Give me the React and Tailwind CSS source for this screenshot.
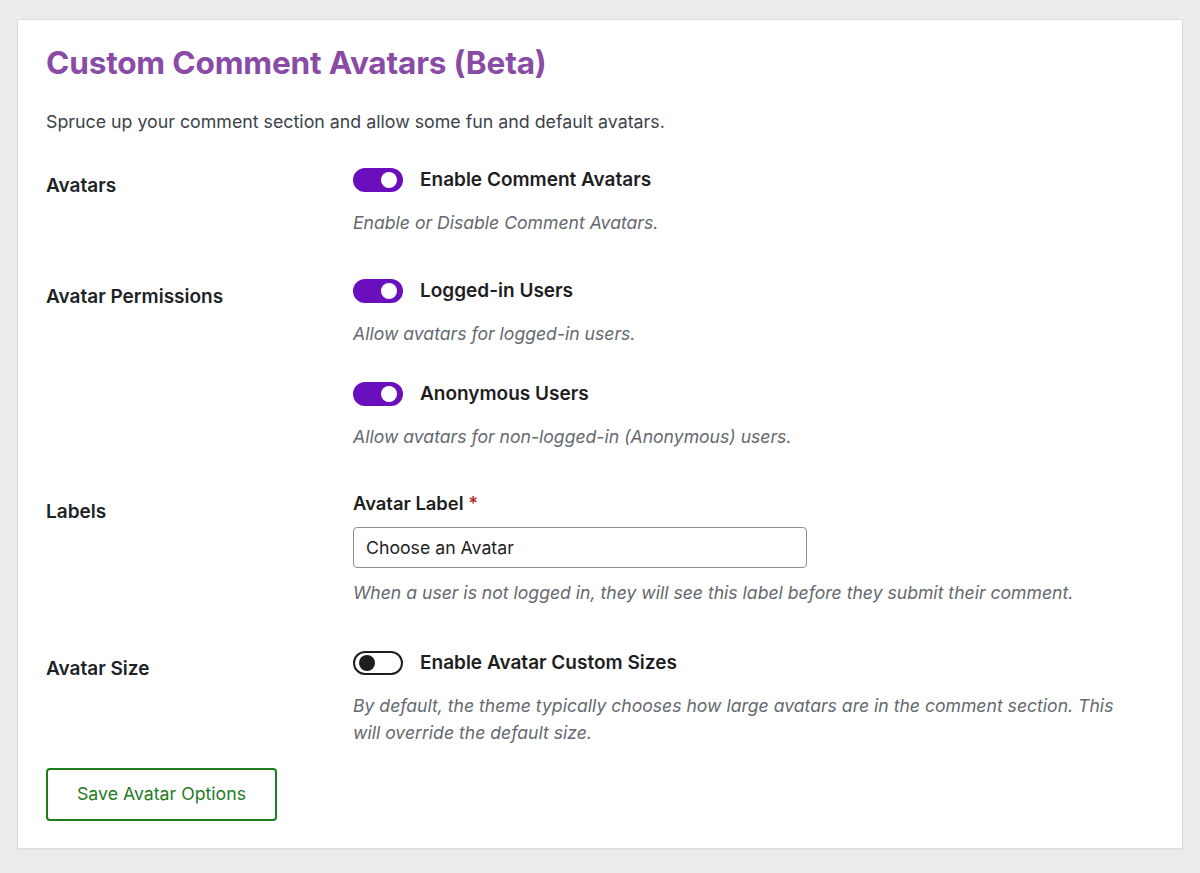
import React, { useState } from "react";

const Toggle = ({ checked, onChange }) => (
  <button
    type="button"
    onClick={() => onChange(!checked)}
    className={
      checked
        ? "relative flex h-[24px] w-[50px] shrink-0 items-center rounded-full border-2 border-[#6a0fbd] bg-[#6a0fbd]"
        : "relative flex h-[24px] w-[50px] shrink-0 items-center rounded-full border-2 border-[#1e1e1e] bg-white"
    }
  >
    <span
      className={
        checked
          ? "absolute right-[4px] h-[16px] w-[16px] rounded-full bg-white"
          : "absolute left-[4px] h-[16px] w-[16px] rounded-full bg-[#1e1e1e]"
      }
    />
  </button>
);

const ToggleField = ({ label, help, checked, onChange }) => (
  <div>
    <div className="flex items-center gap-[17px]">
      <Toggle checked={checked} onChange={onChange} />
      <span className="text-[19px] font-semibold leading-[26px] text-[#1e1e1e]">{label}</span>
    </div>
    <p className="mt-[16px] max-w-[785px] text-[17.6px] italic leading-[27px] text-[#646970]">{help}</p>
  </div>
);

const Row = ({ title, children, className = "", titleClass = "pt-[6px]" }) => (
  <div className={"flex " + className}>
    <div className={"w-[307px] shrink-0 text-[19px] font-semibold leading-[26px] text-[#1d2327] " + titleClass}>
      {title}
    </div>
    <div className="flex-1">{children}</div>
  </div>
);

export default function App() {
  const [avatars, setAvatars] = useState(true);
  const [loggedIn, setLoggedIn] = useState(true);
  const [anon, setAnon] = useState(true);
  const [sizes, setSizes] = useState(false);
  const [label, setLabel] = useState("Choose an Avatar");

  return (
    <div
      className="min-h-[873px] bg-[#ececec] px-[17px] pt-[19px] pb-[24px]"
      style={{ fontFamily: "Inter, 'Noto Sans', sans-serif" }}
    >
      <div className="h-[830px] border border-[#dcdcde] bg-white px-[28px] pt-[22px] shadow-[0_1px_2px_rgba(0,0,0,0.04)]">
        <h1 className="text-[31.6px] font-bold leading-[42px] tracking-[-0.2px] text-[#8a4ba6]">
          Custom Comment Avatars (Beta)
        </h1>
        <p className="mt-[25px] text-[17.8px] leading-[26px] text-[#3c434a]">
          Spruce up your comment section and allow some fun and default avatars.
        </p>

        <Row title="Avatars" className="mt-[32px]">
          <ToggleField
            label="Enable Comment Avatars"
            help="Enable or Disable Comment Avatars."
            checked={avatars}
            onChange={setAvatars}
          />
        </Row>

        <Row title="Avatar Permissions" className="mt-[42px]">
          <ToggleField
            label="Logged-in Users"
            help="Allow avatars for logged-in users."
            checked={loggedIn}
            onChange={setLoggedIn}
          />
          <div className="mt-[34px]">
            <ToggleField
              label="Anonymous Users"
              help="Allow avatars for non-logged-in (Anonymous) users."
              checked={anon}
              onChange={setAnon}
            />
          </div>
        </Row>

        <Row title="Labels" className="mt-[40px]" titleClass="pt-[9px]">
          <label className="block text-[18.4px] font-semibold leading-[26px] text-[#1e1e1e]">
            Avatar Label <span className="text-[#b32d2e]">*</span>
          </label>
          <input
            value={label}
            onChange={(e) => setLabel(e.target.value)}
            className="mt-[11px] h-[41px] w-[454px] rounded-[4px] border border-[#8c8f94] px-[12px] text-[17.7px] text-[#1e1e1e] outline-none"
          />
          <p className="mt-[11px] text-[17.6px] italic leading-[27px] text-[#646970]">
            When a user is not logged in, they will see this label before they submit their comment.
          </p>
        </Row>

        <Row title="Avatar Size" className="mt-[44px]">
          <ToggleField
            label="Enable Avatar Custom Sizes"
            help="By default, the theme typically chooses how large avatars are in the comment section. This will override the default size."
            checked={sizes}
            onChange={setSizes}
          />
        </Row>

        <button
          type="button"
          className="mt-[22px] h-[53px] w-[231px] rounded-[4px] border-2 border-[#1e7b1e] text-[17.7px] text-[#1e7b1e]"
        >
          Save Avatar Options
        </button>
      </div>
    </div>
  );
}
